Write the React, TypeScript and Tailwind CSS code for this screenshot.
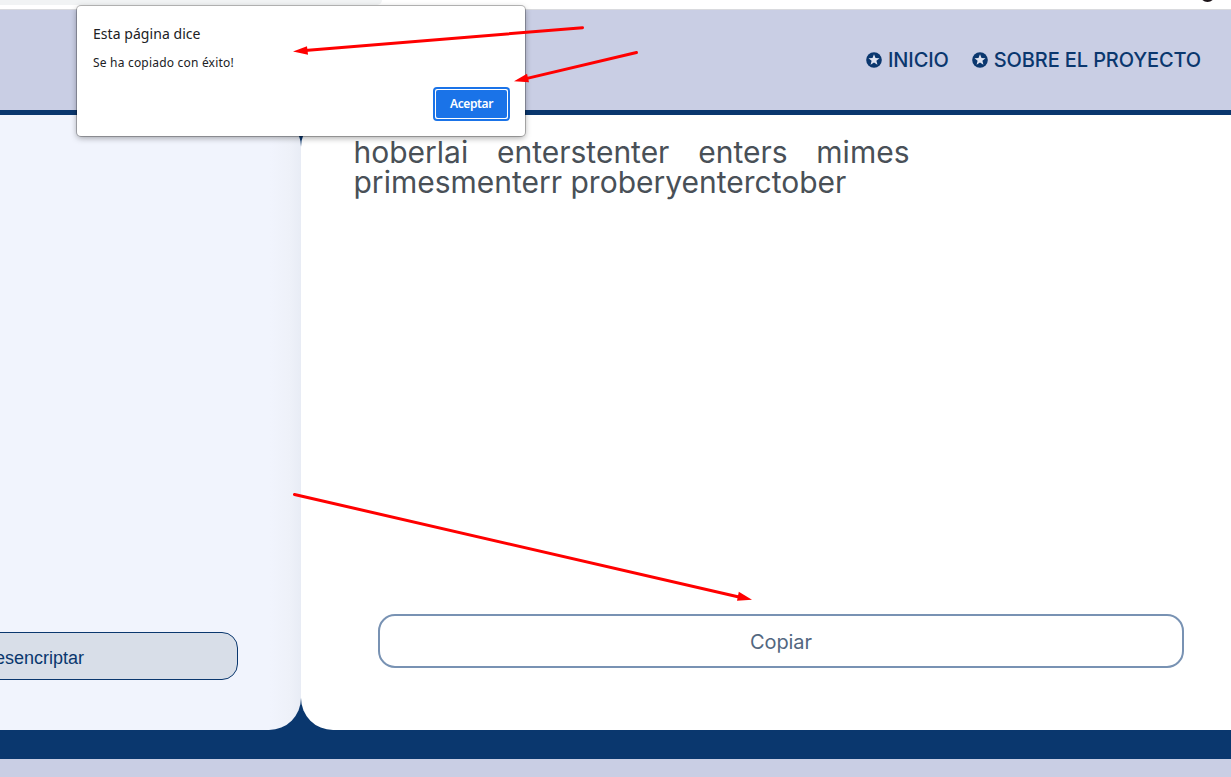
import React from "react";

function StarBadge() {
  return (
    <svg className="-mt-px h-4 w-4 shrink-0" viewBox="0 0 16 16" aria-hidden="true">
      <circle cx="8" cy="8" r="7.8" fill="#0a376e" />
      <path
        d="M8 2.3l1.5 3.75 4 .25-3.1 2.55 1.03 3.9L8 10.6l-3.43 2.15 1.03-3.9L2.5 6.3l4-.25z"
        fill="#dfe3f0"
      />
    </svg>
  );
}

function NavLink({ children }: { children: string }) {
  return (
    <a className="flex items-center gap-[6px] whitespace-nowrap">
      <StarBadge />
      <span>{children}</span>
    </a>
  );
}

function Dialog() {
  return (
    <div
      role="dialog"
      className="absolute left-[77px] top-[6px] flex h-[130px] w-[448px] flex-col rounded-[4px] bg-white px-4 font-['Noto_Sans',sans-serif] text-[#202124] shadow-[0_0_0_1px_rgba(0,0,0,0.25),0_2px_6px_rgba(0,0,0,0.35)]"
    >
      <h1 className="mt-[17px] text-[14px] leading-[22px] tracking-[0.05px]">Esta página dice</h1>
      <p className="mt-[8px] text-[12px] leading-[20px] tracking-[0.2px]">Se ha copiado con éxito!</p>
      <button className="-mr-px mt-[14px] h-[34px] w-[77px] self-end rounded-[4px] border-2 border-[#1a73e8] bg-white p-px">
        <span className="flex h-full items-center justify-center rounded-[2px] bg-[#1a73e8] text-[12px] font-semibold tracking-[-0.4px] text-white">
          Aceptar
        </span>
      </button>
    </div>
  );
}

function Arrows() {
  return (
    <svg
      className="pointer-events-none absolute left-0 top-0 h-[777px] w-[1231px]"
      viewBox="0 0 1231 777"
      fill="#ff0000"
      stroke="#ff0000"
      aria-hidden="true"
    >
      <g strokeWidth="3" strokeLinecap="round">
        <path d="M582.5 27.7L305 50.6" />
        <path d="M636.5 52.5L526 78.6" />
        <path d="M294.5 494.5L740 597.2" />
      </g>
      <g stroke="none">
        <path d="M293 51.6L307 46.2L308 54.7Z" />
        <path d="M514 81.3L527 73.8L529 82.3Z" />
        <path d="M752 599.8L738.8 591.8L737 600.8Z" />
      </g>
    </svg>
  );
}

export default function App() {
  return (
    <div className="relative flex h-[777px] w-[1231px] flex-col overflow-hidden bg-[#c9cee4] font-['Inter',sans-serif]">
      <div className="relative flex h-[10px] shrink-0 flex-col overflow-hidden border-b border-[#d9dade] bg-white">
        <div className="h-[5px] w-[382px] rounded-br-[8px] bg-[#f1f3f4]" />
        <span className="absolute -top-[13px] left-[1200px] h-[15px] w-[15px] rounded-full bg-[#1c1418]" />
      </div>
      <header className="flex h-[105px] shrink-0 items-center justify-end gap-[23px] border-b-[5px] border-[#0a376e] pr-[30px] text-[20px] font-medium tracking-[-0.12px] text-[#0a376e]">
        <NavLink>INICIO</NavLink>
        <NavLink>SOBRE EL PROYECTO</NavLink>
      </header>
      <main className="flex h-[644px] shrink-0 bg-[#0a376e] pb-[29px]">
        <section className="relative flex w-[301px] shrink-0 flex-col justify-end overflow-hidden rounded-r-[32px] bg-[linear-gradient(to_right,#f1f4fd_270px,#eef1f9_290px,#e8ecf5_301px)] pb-[50px]">
          <button className="-ml-[170px] flex h-[48px] w-[408px] items-center justify-center rounded-[16px] border border-[#0a376e] bg-[#d8dee8] pr-[2px] pt-[4px] font-['Liberation_Sans',sans-serif] text-[18px] text-[#0a376e]">
            Desencriptar
          </button>
        </section>
        <section className="flex grow flex-col rounded-l-[32px] bg-white pl-[52.5px] pt-[22px]">
          <p className="w-[556px] text-justify text-[30px] font-normal leading-[30px] text-[#495057]">
            hoberlai enterstenter enters mimes primesmenterr proberyenterctober
          </p>
          <button className="mb-[62px] ml-[24.5px] mt-auto h-[54px] w-[806px] rounded-[17px] border-2 border-[#7892b3] pt-px text-[20px] tracking-[-0.1px] text-[#526780]">
            Copiar
          </button>
        </section>
      </main>
      <footer className="grow" />
      <Dialog />
      <Arrows />
    </div>
  );
}
